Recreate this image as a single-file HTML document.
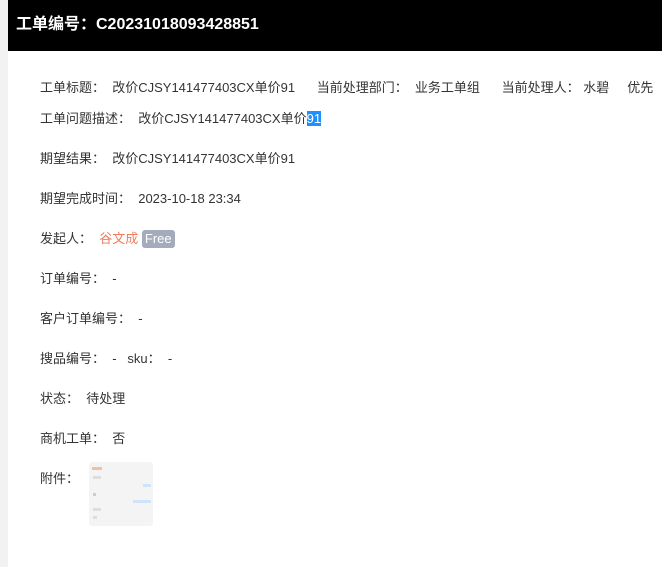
<!DOCTYPE html>
<html><head><meta charset="utf-8"><style>
body{margin:0;width:662px;height:567px;overflow:hidden;background:#f2f2f2;font-family:"Liberation Sans","Noto Sans CJK SC",sans-serif;}
.main{position:absolute;left:8px;top:0;width:654px;height:567px;background:#fff;}
.hd{height:51px;background:#000;color:#fff;font-weight:bold;font-size:16px;line-height:49px;padding-left:8px;white-space:nowrap;}
.r{position:absolute;left:32px;font-size:13px;color:#333;white-space:nowrap;line-height:18px;}
.sel{background:#1e90ff;color:#fff;}
.tag{display:inline-block;background:#a3abbd;color:#fff;border-radius:3px;padding:0 3px;font-size:13px;line-height:18px;}
.th{position:absolute;left:81px;top:462px;width:64px;height:64px;background:#f4f4f4;border-radius:3px;}
.th i{position:absolute;display:block;height:3px;}
</style></head><body>
<div class="main">
<div class="hd">工单编号：C20231018093428851</div>
<div class="r" style="top:79px">工单标题：&nbsp;&nbsp;改价CJSY141477403CX单价91&nbsp;&nbsp;&nbsp;&nbsp;&nbsp;&nbsp;当前处理部门：&nbsp;&nbsp;业务工单组&nbsp;&nbsp;&nbsp;&nbsp;&nbsp;&nbsp;当前处理人：&nbsp;水碧&nbsp;&nbsp;&nbsp;&nbsp;&nbsp;优先</div>
<div class="r" style="top:110px">工单问题描述：&nbsp;&nbsp;改价CJSY141477403CX单价<span class="sel">91</span></div>
<div class="r" style="top:150px">期望结果：&nbsp;&nbsp;改价CJSY141477403CX单价91</div>
<div class="r" style="top:190px">期望完成时间：&nbsp;&nbsp;2023-10-18 23:34</div>
<div class="r" style="top:230px">发起人：&nbsp;&nbsp;<span style="color:#f07c5c">谷文成</span> <span class="tag">Free</span></div>
<div class="r" style="top:270px">订单编号：&nbsp;&nbsp;-</div>
<div class="r" style="top:310px">客户订单编号：&nbsp;&nbsp;-</div>
<div class="r" style="top:350px">搜品编号：&nbsp;&nbsp;-&nbsp;&nbsp;&nbsp;sku：&nbsp;&nbsp;-</div>
<div class="r" style="top:390px">状态：&nbsp;&nbsp;待处理</div>
<div class="r" style="top:430px">商机工单：&nbsp;&nbsp;否</div>
<div class="r" style="top:470px">附件：</div>
<div class="th">
<i style="left:3px;top:5px;width:10px;background:#f0c0a0"></i>
<i style="left:4px;top:14px;width:8px;background:#ddd"></i>
<i style="left:54px;top:22px;width:8px;background:#cfe4f8"></i>
<i style="left:4px;top:31px;width:3px;background:#ccc"></i>
<i style="left:44px;top:38px;width:18px;background:#cfe4f8"></i>
<i style="left:4px;top:46px;width:8px;background:#ddd"></i>
<i style="left:4px;top:54px;width:4px;background:#ddd"></i>
</div>
</div>
</body></html>
